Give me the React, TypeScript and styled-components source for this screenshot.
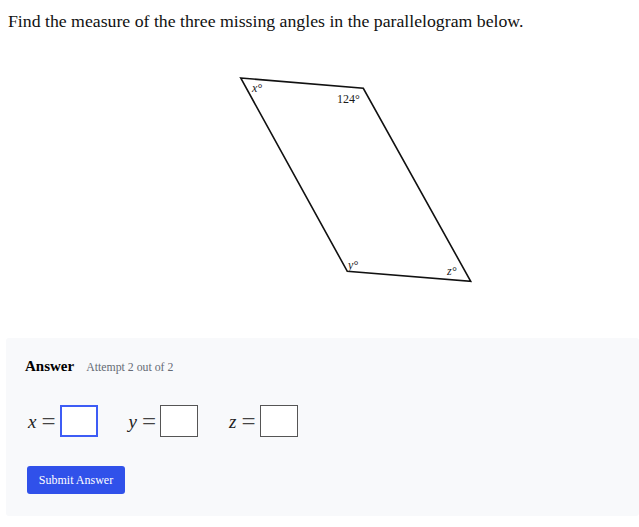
import React from 'react'
import styled, { createGlobalStyle } from 'styled-components'

const Global = createGlobalStyle`
  html, body {
    margin: 0;
    padding: 0;
    background: #fff;
  }
  body {
    font-family: "Liberation Serif", "Times New Roman", serif;
    color: #111;
  }
`

const Page = styled.div`
  width: 639px;
  padding: 0 0 0 8px;
  box-sizing: border-box;
`

const Question = styled.p`
  margin: 11px 0 0;
  font-size: 17.75px;
  line-height: 20px;
  color: #111;
`

const Figure = styled.div`
  padding: 38px 0 0 222px;
  height: 220px;
`

const Panel = styled.section`
  margin: 49px 0 0 -2px;
  padding: 20px 0 22px 19px;
  background: #f8f9fb;
  border-radius: 3px;
`

const Head = styled.div`
  display: flex;
  align-items: baseline;
  gap: 12px;
`

const Title = styled.span`
  font-size: 15px;
  font-weight: bold;
  color: #000;
`

const Attempt = styled.span`
  font-size: 11.8px;
  color: #666b75;
`

const Fields = styled.div`
  display: flex;
  align-items: center;
  gap: 31px;
  margin: 30px 0 0 3px;
`

const Field = styled.label`
  display: flex;
  align-items: center;
  gap: 4px;
`

const Var = styled.span`
  font-style: italic;
  font-size: 19px;
  line-height: 1;
  margin-right: 1px;
  color: #222;
`

const Eq = styled.span`
  font-size: 25px;
  line-height: 1;
  color: #444;
`

const Box = styled.input<{ $active?: boolean }>`
  width: 38px;
  height: 32px;
  box-sizing: border-box;
  margin: 0;
  background: #fff;
  border: ${p => (p.$active ? '2px solid #3d5cf5' : '1px solid #555')};
  border-radius: 0;
  outline: none;
`

const Submit = styled.button`
  display: block;
  margin: 29px 0 0 2px;
  width: 98px;
  height: 28px;
  border: 0;
  border-radius: 3px;
  background: #3051ea;
  color: #fff;
  font-family: "Liberation Serif", serif;
  font-size: 12px;
  cursor: pointer;
`

const Label = styled.text`
  font-family: "Liberation Serif", serif;
  font-size: 12px;
  fill: #1a1a1a;
`

function Parallelogram() {
  return (
    <svg width="250" height="220" viewBox="230 70 250 220">
      <polygon
        points="240.7,79 363.3,89.3 470.7,282.3 347.3,272.3"
        fill="none"
        stroke="#111"
        strokeWidth="1.6"
        strokeLinejoin="miter"
      />
      <Label x="252" y="93" fontStyle="italic">x°</Label>
      <Label x="337" y="104">124°</Label>
      <Label x="348" y="270" fontStyle="italic">y°</Label>
      <Label x="447" y="276" fontStyle="italic">z°</Label>
    </svg>
  )
}

export default function App() {
  return (
    <Page>
      <Global />
      <Question>Find the measure of the three missing angles in the parallelogram below.</Question>
      <Figure>
        <Parallelogram />
      </Figure>
      <Panel>
        <Head>
          <Title>Answer</Title>
          <Attempt>Attempt 2 out of 2</Attempt>
        </Head>
        <Fields>
          <Field>
            <Var>x</Var>
            <Eq>=</Eq>
            <Box $active />
          </Field>
          <Field>
            <Var>y</Var>
            <Eq>=</Eq>
            <Box />
          </Field>
          <Field>
            <Var>z</Var>
            <Eq>=</Eq>
            <Box />
          </Field>
        </Fields>
        <Submit>Submit Answer</Submit>
      </Panel>
    </Page>
  )
}
